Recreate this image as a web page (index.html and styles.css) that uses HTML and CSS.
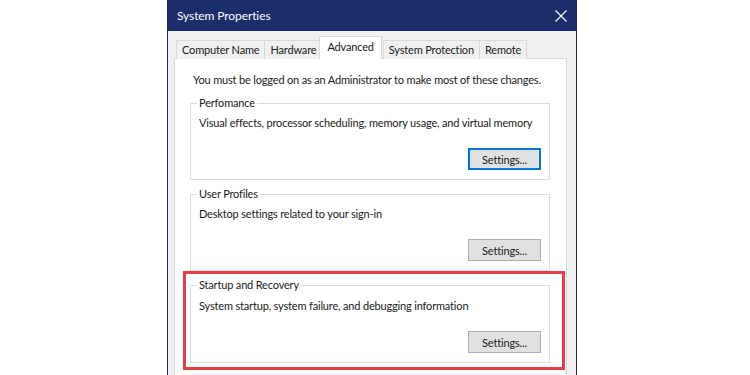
FILE: index.html
```html
<!DOCTYPE html>
<html lang="en">
<head>
<meta charset="utf-8">
<title>System Properties</title>
<link rel="stylesheet" href="styles.css">
</head>
<body>
<div class="window">
  <div class="titlebar">
    <span class="title">System Properties</span>
    <svg class="close" width="12" height="12" viewBox="0 0 12 12" aria-hidden="true">
      <path d="M0.5 0.5 L11.5 11.5 M11.5 0.5 L0.5 11.5" stroke="#ffffff" stroke-width="1.1" fill="none"/>
    </svg>
  </div>
  <div class="client">
    <div class="tabs">
      <div class="tab">Computer Name</div>
      <div class="tab">Hardware</div>
      <div class="tab active">Advanced</div>
      <div class="tab">System Protection</div>
      <div class="tab">Remote</div>
    </div>
    <div class="pane">
      <p class="note">You must be logged on as an Administrator to make most of these changes.</p>
      <fieldset class="group">
        <legend>Perfomance</legend>
        <p class="desc">Visual effects, processor scheduling, memory usage, and virtual memory</p>
        <div class="actions"><button class="btn focused">Settings...</button></div>
      </fieldset>
      <fieldset class="group">
        <legend>User Profiles</legend>
        <p class="desc">Desktop settings related to your sign-in</p>
        <div class="actions"><button class="btn">Settings...</button></div>
      </fieldset>
      <div class="highlight">
        <fieldset class="group">
          <legend>Startup and Recovery</legend>
          <p class="desc">System startup, system failure, and debugging information</p>
          <div class="actions"><button class="btn">Settings...</button></div>
        </fieldset>
      </div>
    </div>
  </div>
</div>
</body>
</html>
```
FILE: styles.css
```css
html, body {
  margin: 0;
  padding: 0;
  height: 375px;
  overflow: hidden;
  background: #ffffff;
}

body {
  font-family: Lato, "Liberation Sans", sans-serif;
  font-size: 11px;
  letter-spacing: -0.17px;
  color: #1a1a1a;
}

.window {
  margin-left: 167px;
  width: 410px;
  height: 420px;
  box-sizing: border-box;
  border-left: 1px solid #1b2e6b;
  border-right: 1px solid #1b2e6b;
  background: #f0f0f0;
  display: flex;
  flex-direction: column;
}

.titlebar {
  height: 31px;
  flex: none;
  background: #1b2e6b;
  color: #ffffff;
  display: flex;
  align-items: center;
  padding: 0 9px 0 9px;
}

.title {
  font-size: 12px;
  letter-spacing: -0.1px;
  line-height: 16px;
}

.close {
  margin-left: auto;
  display: block;
}

.client {
  flex: 1;
  display: flex;
  flex-direction: column;
  padding: 6px 9px 0 6px;
}

.tabs {
  display: flex;
  align-items: flex-end;
  height: 22px;
  padding-left: 2px;
  margin-bottom: -1px;
  position: relative;
  z-index: 1;
}

.tab {
  height: 19px;
  box-sizing: border-box;
  border: 1px solid #d9d9d9;
  border-bottom: none;
  background: #f0f0f0;
  padding: 0 5px;
  line-height: 17px;
  margin-right: -1px;
  white-space: nowrap;
}

.tab.active {
  height: 23px;
  background: #ffffff;
  margin: 0 1px 0 -2px;
  padding: 0 7px;
  line-height: 19px;
}

.pane {
  flex: 1;
  background: #ffffff;
  border: 1px solid #d9d9d9;
}

.note {
  margin: 14px 0 9px 18px;
  line-height: 14px;
  white-space: nowrap;
}

.group {
  margin: 0 16px 7px 15px;
  padding: 0 8px 9px 8px;
  border: 1px solid #dcdcdc;
  min-width: 0;
}

.group legend {
  padding: 0 2px;
  margin-left: -2px;
  line-height: 14px;
}

.desc {
  margin: 6px 0 0 0;
  line-height: 14px;
  white-space: nowrap;
}

.actions {
  display: flex;
  justify-content: flex-end;
  margin-top: 18px;
}

.btn {
  width: 73px;
  height: 22px;
  box-sizing: border-box;
  background: #e1e1e1;
  border: 1px solid #adadad;
  font-family: Lato, "Liberation Sans", sans-serif;
  font-size: 11px;
  letter-spacing: -0.17px;
  color: #1a1a1a;
  padding: 0;
  margin: 0;
}

.btn.focused {
  border: 2px solid #0078d7;
}

.highlight {
  margin: -7px 1px 0 8px;
  border: 3px solid #e63b40;
  padding: 4px 12px 4px 4px;
}

.highlight .group {
  margin: 0;
  padding-bottom: 9px;
}

.highlight .desc {
  margin-top: 7px;
}
```
